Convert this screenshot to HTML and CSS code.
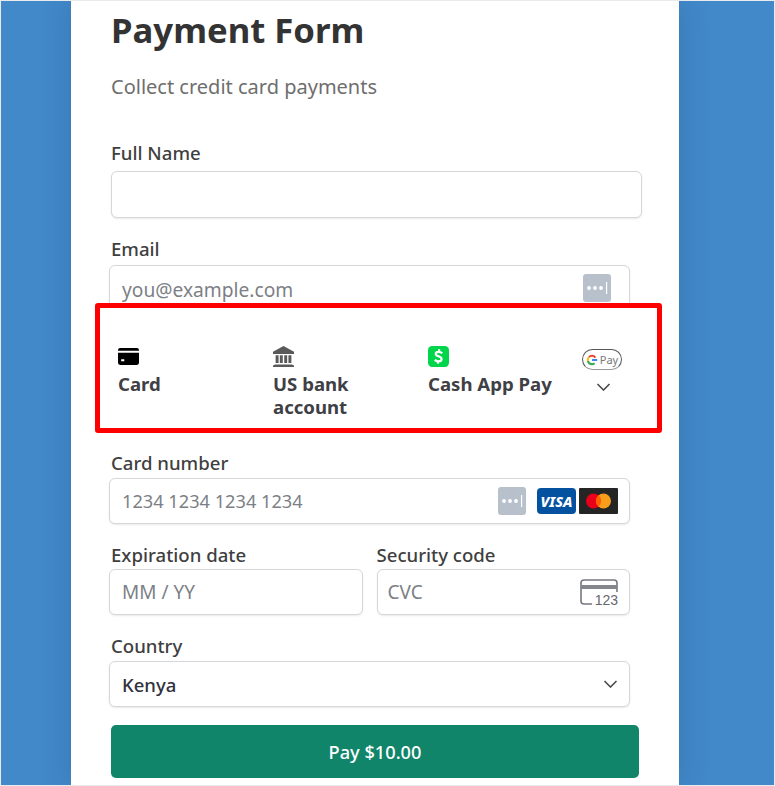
FILE: index.html
```html
<!DOCTYPE html>
<html lang="en">
<head>
    <meta charset="UTF-8">
    <meta name="viewport" content="width=device-width, initial-scale=1.0">
    <title>Payment Form</title>
    <link rel="stylesheet" href="styles.css">
</head>
<body>
    <main class="card">
        <h1 class="title">Payment Form</h1>
        <p class="subtitle">Collect credit card payments</p>

        <label class="label label-first">Full Name</label>
        <div class="input input-wide"></div>

        <label class="label label-email">Email</label>
        <div class="input input-email">
            <span class="placeholder placeholder-email">you@example.com</span>
            <svg class="icon-dots" viewBox="0 0 28 28"><rect width="28" height="28" rx="3" fill="#b8c0cc"/><circle cx="6" cy="14" r="1.9" fill="#fff"/><circle cx="12" cy="14" r="1.9" fill="#fff"/><circle cx="18" cy="14" r="1.9" fill="#fff"/><rect x="23" y="8" width="1.2" height="12" fill="#fff"/></svg>
        </div>

        <section class="tabs">
            <div class="tab">
                <svg class="tab-icon" viewBox="0 0 20 16"><path d="M0 2a2 2 0 0 1 2-2h16a2 2 0 0 1 2 2v.6H0z"/><path fill-rule="evenodd" d="M0 4.5h20V14a2 2 0 0 1-2 2H2a2 2 0 0 1-2-2zM3 10.500h3v2H3z"/></svg>
                <span class="tab-name">Card</span>
            </div>
            <div class="tab">
                <svg class="tab-icon tab-bank" viewBox="0 0 20 20"><path d="M10 0 20 5.500V7.500H0V5.500zM2 17.500h16l2 1V20H0v-1.500zM2.500 8.800h2.800v7.500H2.500zM6.500 8.800h2.800v7.500H6.500zM10.700 8.800h2.800v7.500h-2.800zM14.700 8.800h2.800v7.500h-2.800z"/></svg>
                <span class="tab-name">US bank account</span>
            </div>
            <div class="tab">
                <svg class="tab-icon" viewBox="0 0 20 20"><rect width="20" height="20" rx="4" fill="#00d54b"/><path d="M13.600 6.900C12.700 6 11.500 5.500 10.200 5.500 8.700 5.500 7.400 6.200 7.400 7.600c0 2.700 5.500 1.700 5.500 4.700 0 1.500-1.300 2.300-3 2.300-1.300 0-2.600-.5-3.500-1.400M10.600 3.200v2.300M9.500 14.500v2.300" fill="none" stroke="#fff" stroke-width="2.100"/></svg>
                <span class="tab-name">Cash App Pay</span>
            </div>
            <div class="tab tab-more">
                <div class="gpay">
                    <svg class="gpay-g" viewBox="0 0 12 12">
                        <circle cx="6" cy="6" r="4.200" fill="none" stroke="#ea4335" stroke-width="2" pathLength="100" stroke-dasharray="28 72" stroke-dashoffset="38"/>
                        <circle cx="6" cy="6" r="4.200" fill="none" stroke="#fbbc04" stroke-width="2" pathLength="100" stroke-dasharray="16 84" stroke-dashoffset="54"/>
                        <circle cx="6" cy="6" r="4.200" fill="none" stroke="#34a853" stroke-width="2" pathLength="100" stroke-dasharray="32 68" stroke-dashoffset="-14"/>
                        <rect x="6" y="5" width="5.200" height="2" fill="#4285f4"/>
                    </svg>
                    <span>Pay</span>
                </div>
                <svg class="chevron" viewBox="0 0 14 8"><path d="M1 1l6 6 6-6" fill="none" stroke="#4a4a4a" stroke-width="1.600"/></svg>
            </div>
        </section>

        <label class="label label-number">Card number</label>
        <div class="input input-full">
            <span class="placeholder placeholder-digits">1234 1234 1234 1234</span>
            <div class="card-icons">
                <svg class="icon-dots" viewBox="0 0 28 28"><rect width="28" height="28" rx="3" fill="#b8c0cc"/><circle cx="6" cy="14" r="1.9" fill="#fff"/><circle cx="12" cy="14" r="1.9" fill="#fff"/><circle cx="18" cy="14" r="1.9" fill="#fff"/><rect x="23" y="8" width="1.2" height="12" fill="#fff"/></svg>
                <span class="visa">VISA</span>
                <svg class="mastercard" viewBox="0 0 39 26"><rect width="39" height="26" rx="1" fill="#252525"/><circle cx="14.500" cy="13" r="7.500" fill="#eb001b"/><circle cx="24.500" cy="13" r="7.500" fill="#f79e1b"/><path d="M19.500 7.200a7.500 7.500 0 0 1 0 11.600 7.500 7.500 0 0 1 0-11.600z" fill="#ff5f00"/></svg>
            </div>
        </div>

        <div class="split">
            <div class="split-col">
                <label class="label">Expiration date</label>
                <div class="input">
                    <span class="placeholder">MM / YY</span>
                </div>
            </div>
            <div class="split-col">
                <label class="label label-code">Security code</label>
                <div class="input input-code">
                    <span class="placeholder">CVC</span>
                    <div class="cvc">
                        <svg class="cvc-card" viewBox="0 0 38 26"><path d="M12 25H4a3 3 0 0 1-3-3V4a3 3 0 0 1 3-3h30a3 3 0 0 1 3 3v9" fill="none" stroke="#77787f" stroke-width="1.600"/><rect x="1" y="6" width="36" height="4" fill="#85868c"/></svg>
                        <span class="cvc-num">123</span>
                    </div>
                </div>
            </div>
        </div>

        <label class="label label-country">Country</label>
        <div class="input input-full">
            <span class="value">Kenya</span>
            <svg class="select-arrow" viewBox="0 0 14 8"><path d="M1 1l6 6 6-6" fill="none" stroke="#4a4a4a" stroke-width="1.600"/></svg>
        </div>

        <button class="pay">Pay $10.00</button>
    </main>
</body>
</html>
```

FILE: styles.css
```css
html, body {
    height: 100%;
}
body {
    margin: 0;
    height: 786px;
    box-sizing: border-box;
    overflow: hidden;
    background-color: #4289ca;
    border: 1px solid #e9eaec;
    font-family: "Noto Sans", Arial, sans-serif;
    color: #3a3a3a;
}
.card {
    width: 608px;
    height: 784px;
    margin-left: 70px;
    box-sizing: border-box;
    padding: 8px 0 0 38px;
    background: #fff;
    box-shadow: 0 0 28px rgba(20, 50, 90, 0.22);
}
.title {
    margin: 0;
    padding-left: 2px;
    font-size: 34.7px;
    line-height: 41px;
    font-weight: 700;
    color: #333;
}
.subtitle {
    margin: 23px 0 0;
    padding-left: 2px;
    font-size: 20px;
    line-height: 28px;
    color: #6e6e6e;
}
.label {
    display: block;
    padding-left: 2px;
    font-size: 18.6px;
    line-height: 24px;
    font-weight: 500;
    color: #3f3f3f;
}
.label-first {
    margin-top: 40px;
}
.label-email {
    margin-top: 19px;
}
.label-number {
    margin-top: 18px;
}
.label-country {
    margin-top: 19px;
}
.label-code {
    padding-left: 0;
}
.input {
    display: flex;
    align-items: center;
    justify-content: space-between;
    height: 46px;
    box-sizing: border-box;
    margin-top: 3px;
    padding: 0 11px 0 12px;
    background: #fff;
    border: 1px solid #d5d7da;
    border-radius: 6px;
    box-shadow: 0 1px 2px rgba(0, 0, 0, 0.09);
}
.input-wide {
    width: 531px;
    height: 47px;
    margin: 6px 0 0 2px;
}
.input-email,
.input-full {
    width: 521px;
}
.input-email {
    margin-top: 4px;
    padding-right: 18px;
}
.input-code {
    padding-left: 10px;
}
.placeholder {
    font-size: 19px;
    color: #7d7f86;
}
.placeholder-email {
    font-size: 19.2px;
    padding-top: 2px;
}
.placeholder-digits {
    font-size: 18.2px;
}
.value {
    font-size: 18.5px;
    font-weight: 500;
    color: #30313d;
}
.icon-dots {
    width: 28px;
    height: 28px;
    flex: none;
}
.tabs {
    position: relative;
    display: grid;
    grid-template-columns: repeat(3, 155px) 1fr;
    width: 567px;
    height: 130px;
    box-sizing: border-box;
    margin: -8px 0 0 -14px;
    padding: 38px 18px 0;
    background: #fff;
    border: 5px solid #ff0000;
    border-radius: 3px;
}
.tab {
    display: flex;
    flex-direction: column;
    align-items: flex-start;
}
.tab-icon {
    display: block;
    width: 21px;
    height: 21px;
    margin-bottom: 5px;
}
.tab-bank {
    fill: #595959;
}
.tab-name {
    max-width: 140px;
    font-size: 18.6px;
    line-height: 23px;
    font-weight: 700;
    color: #3f4045;
}
.tab-more {
    width: 42px;
    margin-left: -1px;
}
.gpay {
    display: flex;
    align-items: center;
    justify-content: center;
    gap: 2px;
    width: 40px;
    height: 21px;
    box-sizing: border-box;
    margin-top: 3px;
    border: 1px solid #555;
    border-bottom-color: #999;
    border-radius: 11px;
    font-size: 11px;
    color: #777;
}
.gpay-g {
    width: 12px;
    height: 12px;
}
.chevron {
    width: 15px;
    height: 8px;
    margin: 13px 0 0 14px;
}
.card-icons {
    display: flex;
    align-items: center;
    gap: 11px;
}
.visa {
    display: block;
    width: 39px;
    height: 26px;
    margin-right: -8px;
    border-radius: 4px;
    background: #04529f;
    color: #fff;
    font-size: 14.5px;
    line-height: 26px;
    font-weight: 800;
    font-style: italic;
    text-align: center;
}
.mastercard {
    width: 39px;
    height: 26px;
}
.split {
    display: flex;
    gap: 14px;
    width: 521px;
    margin-top: 19px;
}
.split-col {
    flex: 1;
}
.split .input {
    margin-top: 2px;
}
.cvc {
    position: relative;
    width: 38px;
    height: 26px;
}
.cvc-card {
    display: block;
    width: 38px;
    height: 26px;
}
.cvc-num {
    position: absolute;
    right: 0;
    bottom: -2px;
    padding-left: 2px;
    background: #fff;
    font-family: "Liberation Sans", Arial, sans-serif;
    font-size: 14px;
    line-height: 14px;
    color: #66676e;
}
.select-arrow {
    width: 15px;
    height: 8px;
}
.pay {
    display: block;
    width: 528px;
    height: 53px;
    margin: 18px 0 0 2px;
    background: #10856a;
    color: #fff;
    border: none;
    border-radius: 5px;
    font-family: inherit;
    font-size: 18.2px;
    font-weight: 500;
}
```
